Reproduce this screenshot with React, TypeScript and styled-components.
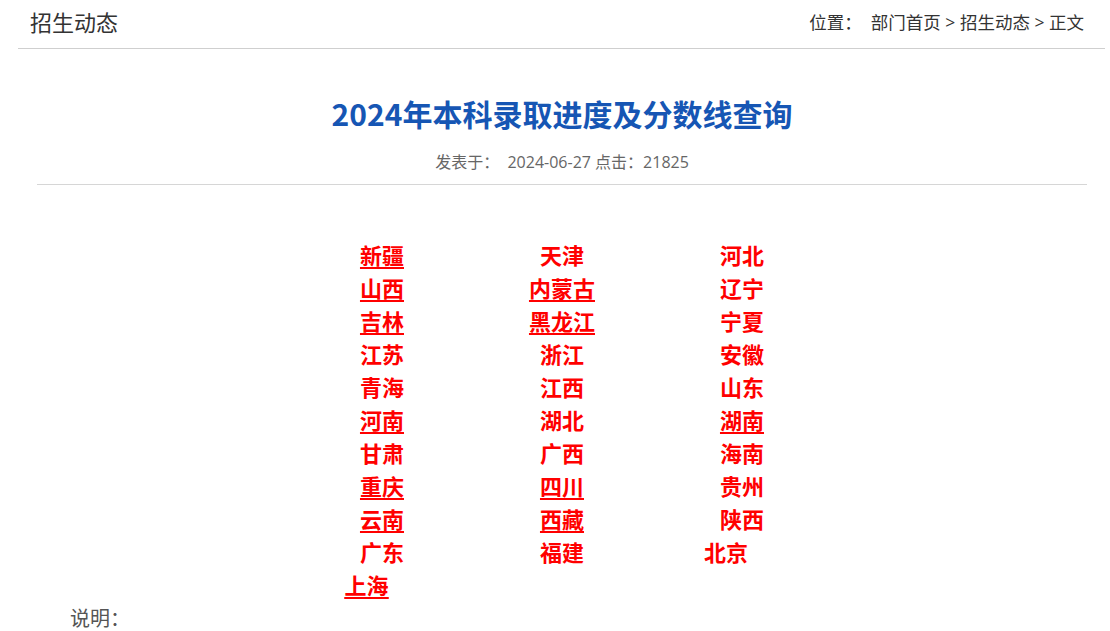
import React from "react";
import styled, { createGlobalStyle } from "styled-components";

const GlobalStyle = createGlobalStyle`
  body {
    margin: 0;
    background: #fff;
    font-family: "Microsoft YaHei", "Noto Sans CJK SC", "Noto Sans", sans-serif;
  }
`;

const Page = styled.div`
  padding: 0 5px 0 18px;
`;

const Header = styled.header`
  display: flex;
  align-items: center;
  justify-content: space-between;
  height: 42px;
  padding: 0 21px 6px 12px;
  border-bottom: 1px solid #cfcfcf;
`;

const Heading = styled.h1`
  margin: 0;
  font-size: 22px;
  font-weight: 400;
  color: #333;
`;

const Crumbs = styled.div`
  font-family: "Open Sans", "Noto Sans CJK SC", sans-serif;
  font-size: 17.5px;
  color: #333;
`;

const Article = styled.article`
  padding: 0 18px 0 19px;
`;

const Title = styled.h2`
  margin: 44px 0 0;
  text-align: center;
  font-size: 30px;
  font-weight: 700;
  line-height: 40px;
  color: #1656b4;
`;

const Meta = styled.div`
  margin-top: 19px;
  text-align: center;
  font-family: "Open Sans", "Noto Sans CJK SC", sans-serif;
  font-size: 16px;
  color: #666;
  line-height: 20px;
  padding-bottom: 12px;
  border-bottom: 1px solid #d6d6d6;
`;

const Grid = styled.div`
  display: grid;
  grid-template-columns: repeat(3, 180px);
  grid-auto-rows: 33px;
  justify-content: center;
  margin-top: 52px;
`;

const Cell = styled.a<{ $linked?: boolean; $nudge?: number }>`
  display: flex;
  align-items: center;
  justify-content: center;
  padding-right: ${(p) => p.$nudge || 0}px;
  font-size: 22px;
  font-weight: 700;
  color: #ff0000;
  text-decoration: ${(p) => (p.$linked ? "underline" : "none")};
  text-underline-offset: 3px;
  text-decoration-thickness: 2px;
`;

const Label = styled.span`
  text-decoration: inherit;
`;

const Note = styled.p`
  margin: 3px 0 0 33px;
  font-size: 20px;
  color: #555;
`;

type Prov = [string, boolean, number?];

const provinces: Prov[] = [
  ["新疆", true], ["天津", false], ["河北", false],
  ["山西", true], ["内蒙古", true], ["辽宁", false],
  ["吉林", true], ["黑龙江", true], ["宁夏", false],
  ["江苏", false], ["浙江", false], ["安徽", false],
  ["青海", false], ["江西", false], ["山东", false],
  ["河南", true], ["湖北", false], ["湖南", true],
  ["甘肃", false], ["广西", false], ["海南", false],
  ["重庆", true], ["四川", true], ["贵州", false],
  ["云南", true], ["西藏", true], ["陕西", false],
  ["广东", false], ["福建", false], ["北京", false, 32],
  ["上海", true, 31],
];

export default function App() {
  return (
    <>
      <GlobalStyle />
      <Page>
        <Header>
          <Heading>招生动态</Heading>
          <Crumbs>位置：&nbsp; 部门首页 &gt; 招生动态 &gt; 正文</Crumbs>
        </Header>
        <Article>
          <Title>2024年本科录取进度及分数线查询</Title>
          <Meta>发表于：&nbsp; 2024-06-27 点击：21825</Meta>
          <Grid>
            {provinces.map(([name, linked, nudge]) => (
              <Cell key={name} $linked={linked} $nudge={nudge}>
                <Label>{name}</Label>
              </Cell>
            ))}
          </Grid>
          <Note>说明：</Note>
        </Article>
      </Page>
    </>
  );
}
